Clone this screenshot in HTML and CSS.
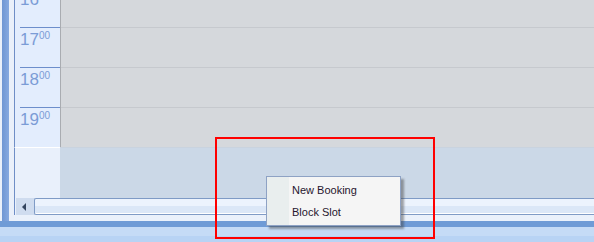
FILE: index.html
```html
<!DOCTYPE html>
<html>
<head>
<meta charset="utf-8">
<link rel="stylesheet" href="styles.css">
</head>
<body>
<div class="app">
  <div class="main">
    <div class="side"><div class="side-bar"></div></div>
    <div class="calendar">
      <div class="schedule">
        <div class="hours">
          <div class="hour">
            <div class="hour-label"><div class="label-rule"><span class="h">16</span><span class="m">00</span></div></div>
            <div class="hour-slot"></div>
          </div>
          <div class="hour">
            <div class="hour-label"><div class="label-rule"><span class="h">17</span><span class="m">00</span></div></div>
            <div class="hour-slot"></div>
          </div>
          <div class="hour">
            <div class="hour-label"><div class="label-rule"><span class="h">18</span><span class="m">00</span></div></div>
            <div class="hour-slot"></div>
          </div>
          <div class="hour">
            <div class="hour-label"><div class="label-rule"><span class="h">19</span><span class="m">00</span></div></div>
            <div class="hour-slot"></div>
          </div>
        </div>
      </div>
      <div class="lower">
        <div class="lower-label"></div>
        <div class="lower-slot"></div>
      </div>
      <div class="hscroll">
        <div class="scroll-btn">
          <svg width="5" height="8" viewBox="0 0 5 8"><polygon points="4,0 4,8 0,4" fill="#34455f"/></svg>
        </div>
        <div class="scroll-thumb"></div>
      </div>
      <div class="strip"></div>
    </div>
  </div>
  <div class="status-line"></div>
  <div class="footer"></div>

  <div class="context-menu">
    <div class="menu-item">New Booking</div>
    <div class="menu-item">Block Slot</div>
  </div>
  <div class="highlight"></div>
</div>
</body>
</html>
```
FILE: styles.css
```css
html, body {
  margin: 0;
  padding: 0;
}
body {
  width: 594px;
  height: 242px;
  overflow: hidden;
  font-family: "Liberation Sans", Arial, sans-serif;
}
.app {
  position: relative;
  width: 594px;
  height: 242px;
  display: flex;
  flex-direction: column;
  overflow: hidden;
}
.main {
  display: flex;
  height: 221px;
  background: #eaf0fa;
}
.side {
  width: 14px;
  display: flex;
}
.side-bar {
  width: 7px;
  margin-left: 2px;
  background: linear-gradient(to right, #6f96d3, #86a9e0);
}
.calendar {
  flex: 1;
  display: flex;
  flex-direction: column;
  min-width: 0;
}
.schedule {
  height: 147px;
  overflow: hidden;
}
.hours {
  display: flex;
  flex-direction: column;
  margin-top: -13px;
}
.hour {
  display: flex;
  height: 40px;
}
.hour-label {
  width: 45px;
  padding-left: 5px;
  box-sizing: border-box;
  border-left: 1px solid #6f8ec6;
  border-right: 1px solid #a9acb1;
  background: #e3edfd;
  box-sizing: content-box;
  width: 40px;
}
.label-rule {
  border-top: 1px solid #6d8ecb;
  padding-top: 3px;
  font-size: 17px;
  line-height: 17px;
  color: #7b9cd6;
  white-space: nowrap;
}
.m {
  font-size: 10px;
  line-height: 10px;
  vertical-align: top;
}
.hour-slot {
  flex: 1;
  border-top: 1px solid #c6c9ce;
  background: #d5d8dc;
}
.lower {
  display: flex;
  height: 51px;
}
.lower-label {
  width: 45px;
  border-left: 1px solid #6f8ec6;
  border-top: 1px solid #ffffff;
  background: #e9f0fb;
}
.lower-slot {
  flex: 1;
  border-top: 1px solid #c9d3df;
  background: #cbd8e7;
}
.hscroll {
  display: flex;
  height: 17px;
  border-left: 1px solid #6f8ec6;
  background: #eaf1fb;
}
.scroll-btn {
  width: 18px;
  margin-left: 1px;
  background: #cfdcef;
  display: flex;
  align-items: center;
  justify-content: center;
}
.scroll-btn svg {
  display: block;
  margin-right: 2px;
}
.scroll-thumb {
  flex: 1;
  border: 1px solid #7f9bc6;
  border-right: none;
  border-radius: 2px 0 0 2px;
  background: linear-gradient(#ecf3fd 0, #ecf3fd 50%, #dbe7f7 50%, #dbe7f7 100%);
  box-shadow: inset 0 -1px 0 #ffffff;
}
.strip {
  height: 6px;
  background: #eaf1fb;
}
.status-line {
  height: 6px;
  background: #6f9bd6;
}
.footer {
  flex: 1;
  background: linear-gradient(#c5dbf6 0, #c5dbf6 60%, #b8d3f4 60%, #b8d3f4 100%);
}
.context-menu {
  position: absolute;
  left: 266px;
  top: 176px;
  width: 133px;
  padding: 2px 0 2px;
  border: 1px solid #8ea2c4;
  background: linear-gradient(to right, #e9eeee 0, #e9eeee 22px, #f5f5f5 22px);
  box-shadow: 3px 3px 2px rgba(60, 60, 60, 0.45);
}
.menu-item {
  height: 22px;
  line-height: 22px;
  padding-left: 25px;
  font-size: 11px;
  color: #26152e;
}
.highlight {
  position: absolute;
  left: 215px;
  top: 137px;
  width: 216px;
  height: 98px;
  border: 2px solid #ff0000;
  pointer-events: none;
}
```
